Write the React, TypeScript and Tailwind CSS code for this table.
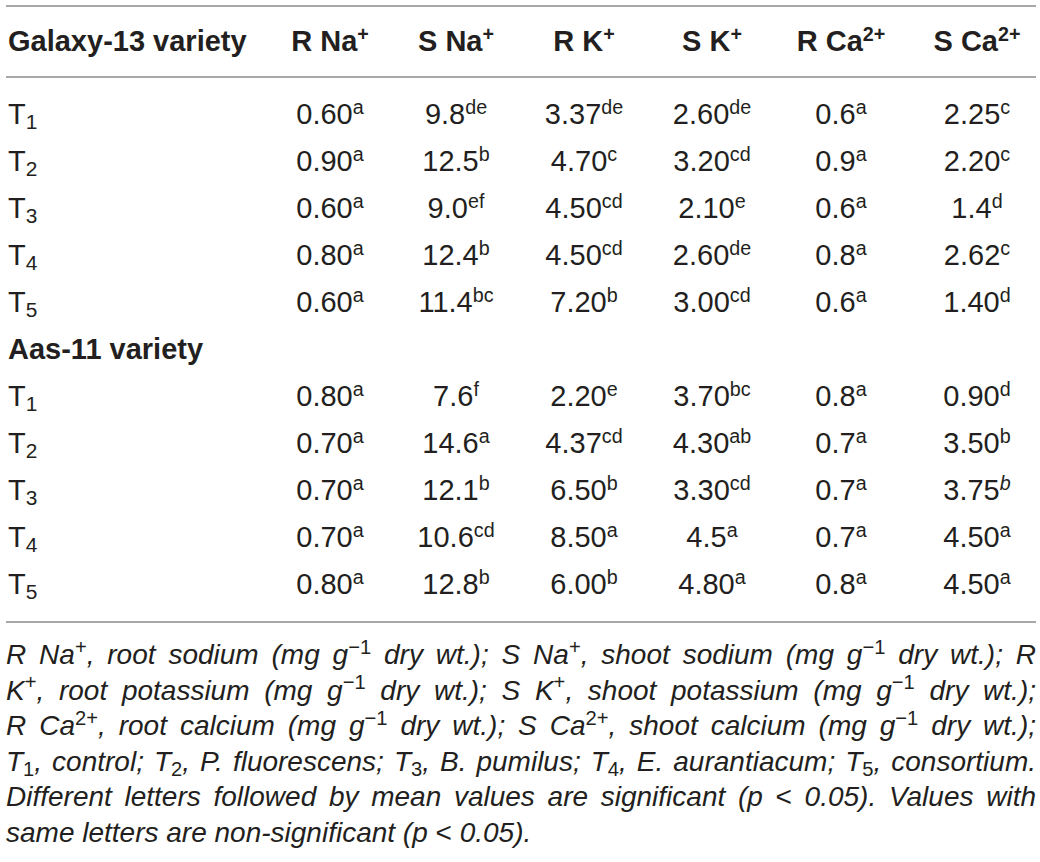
type Cell = [string, string, boolean?];

interface Row {
  t: string;
  cells: Cell[];
}

const galaxy: Row[] = [
  { t: "1", cells: [["0.60", "a"], ["9.8", "de"], ["3.37", "de"], ["2.60", "de"], ["0.6", "a"], ["2.25", "c"]] },
  { t: "2", cells: [["0.90", "a"], ["12.5", "b"], ["4.70", "c"], ["3.20", "cd"], ["0.9", "a"], ["2.20", "c"]] },
  { t: "3", cells: [["0.60", "a"], ["9.0", "ef"], ["4.50", "cd"], ["2.10", "e"], ["0.6", "a"], ["1.4", "d"]] },
  { t: "4", cells: [["0.80", "a"], ["12.4", "b"], ["4.50", "cd"], ["2.60", "de"], ["0.8", "a"], ["2.62", "c"]] },
  { t: "5", cells: [["0.60", "a"], ["11.4", "bc"], ["7.20", "b"], ["3.00", "cd"], ["0.6", "a"], ["1.40", "d"]] },
];

const aas: Row[] = [
  { t: "1", cells: [["0.80", "a"], ["7.6", "f"], ["2.20", "e"], ["3.70", "bc"], ["0.8", "a"], ["0.90", "d"]] },
  { t: "2", cells: [["0.70", "a"], ["14.6", "a"], ["4.37", "cd"], ["4.30", "ab"], ["0.7", "a"], ["3.50", "b"]] },
  { t: "3", cells: [["0.70", "a"], ["12.1", "b"], ["6.50", "b"], ["3.30", "cd"], ["0.7", "a"], ["3.75", "b", true]] },
  { t: "4", cells: [["0.70", "a"], ["10.6", "cd"], ["8.50", "a"], ["4.5", "a"], ["0.7", "a"], ["4.50", "a"]] },
  { t: "5", cells: [["0.80", "a"], ["12.8", "b"], ["6.00", "b"], ["4.80", "a"], ["0.8", "a"], ["4.50", "a"]] },
];

// column widths, first one holds the treatment label
const cols = "grid grid-cols-[262px_124px_128px_128px_128px_130px_130px]";
const last = "text-center pl-[12px]";
const sup = "text-[68%] top-[-0.5em]";

function DataRow({ row }: { row: Row }) {
  return (
    <div className={`${cols} h-[47px] items-center`}>
      <div className="pl-[2px]">
        T<sub className="text-[72%]">{row.t}</sub>
      </div>
      {row.cells.map(([v, l, it], i) => (
        <div key={i} className={i === 5 ? last : "text-center"}>
          {v}
          <sup className={`${sup} ${it ? "italic" : ""}`}>{l}</sup>
        </div>
      ))}
    </div>
  );
}

function Line({ children, last }: { children: React.ReactNode; last?: boolean }) {
  return (
    <p className={last ? "text-left" : "text-justify [text-align-last:justify] whitespace-nowrap"}>
      {children}
    </p>
  );
}

const S = ({ c }: { c: string }) => <sup className="not-italic text-[72%]">{c}</sup>;
const B = ({ c }: { c: string }) => <sub className="not-italic text-[72%]">{c}</sub>;

export default function App() {
  return (
    <main className="w-[1040px] h-[862px] bg-white pl-[6px] pr-[4px] pt-[5px] text-[#231f20] font-['Liberation_Sans',Arial,sans-serif] overflow-hidden">
      <div className="h-[2px] bg-[#a8a8a8]" />

      {/* cabeçalho */}
      <div className={`${cols} h-[69px] items-center text-[29px] font-bold`}>
        <div className="pl-[2px]">Galaxy-13 variety</div>
        <div className="text-center">R Na<sup className={sup}>+</sup></div>
        <div className="text-center">S Na<sup className={sup}>+</sup></div>
        <div className="text-center">R K<sup className={sup}>+</sup></div>
        <div className="text-center">S K<sup className={sup}>+</sup></div>
        <div className="text-center">R Ca<sup className={sup}>2+</sup></div>
        <div className={last}>S Ca<sup className={sup}>2+</sup></div>
      </div>
      <div className="h-[2px] bg-[#a8a8a8]" />

      {/* corpo da tabela */}
      <div className="py-[13px] text-[29px]">
        {galaxy.map((r) => (
          <DataRow key={"g" + r.t} row={r} />
        ))}
        <div className="h-[47px] flex items-center pl-[2px] font-bold">Aas-11 variety</div>
        {aas.map((r) => (
          <DataRow key={"a" + r.t} row={r} />
        ))}
      </div>
      <div className="h-[2px] bg-[#a8a8a8]" />

      {/* nota de rodapé */}
      <div className="pt-[14px] italic text-[28px] leading-[35.5px]">
        <Line>
          R Na<S c="+" />, root sodium (mg g<S c="−1" /> dry wt.); S Na<S c="+" />, shoot sodium (mg g<S c="−1" /> dry wt.); R
        </Line>
        <Line>
          K<S c="+" />, root potassium (mg g<S c="−1" /> dry wt.); S K<S c="+" />, shoot potassium (mg g<S c="−1" /> dry wt.);
        </Line>
        <Line>
          R Ca<S c="2+" />, root calcium (mg g<S c="−1" /> dry wt.); S Ca<S c="2+" />, shoot calcium (mg g<S c="−1" /> dry wt.);
        </Line>
        <Line>
          T<B c="1" />, control; T<B c="2" />, P. fluorescens; T<B c="3" />, B. pumilus; T<B c="4" />, E. aurantiacum; T<B c="5" />, consortium.
        </Line>
        <Line>
          Different letters followed by mean values are significant (p <span className="not-italic">&lt;</span> 0.05). Values with
        </Line>
        <Line last>same letters are non-significant (p <span className="not-italic">&lt;</span> 0.05).</Line>
      </div>
    </main>
  );
}
